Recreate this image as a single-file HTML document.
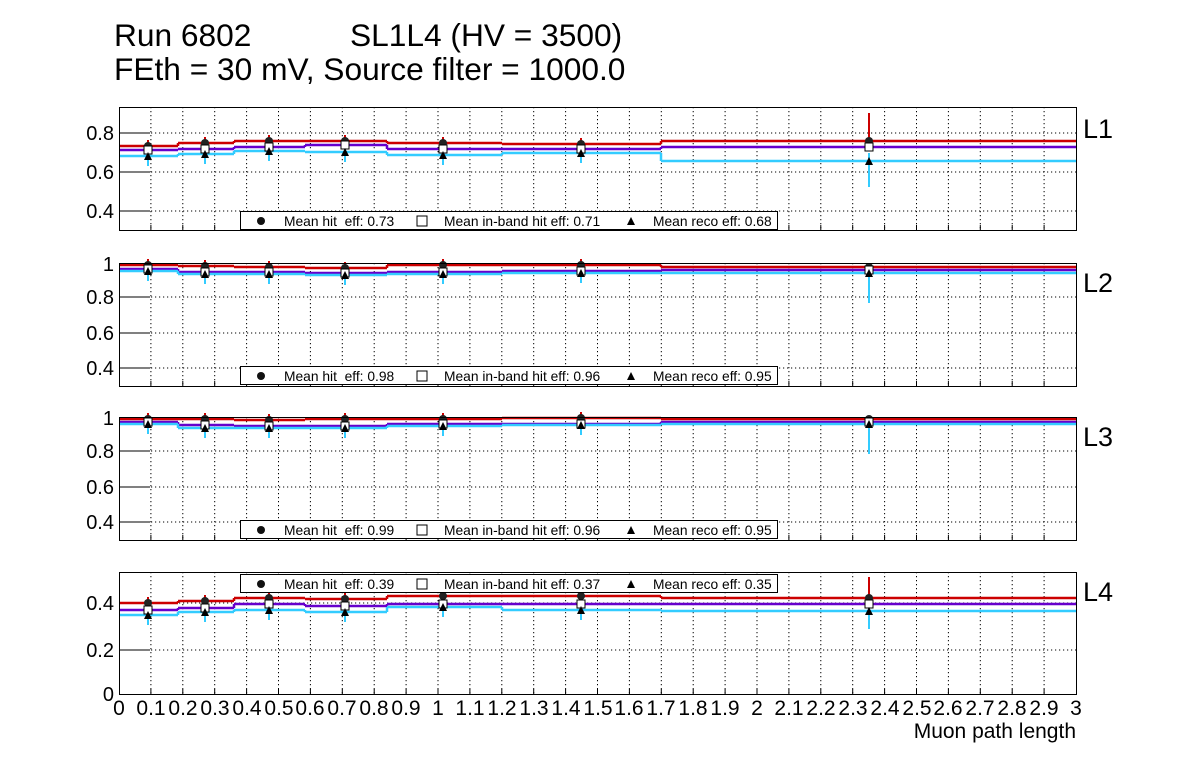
<!DOCTYPE html><html><head><meta charset="utf-8"><style>
body{margin:0;background:#fff;width:1196px;height:772px;overflow:hidden}
text{font-family:"Liberation Sans",sans-serif;fill:#000}
</style></head><body>
<svg id="s" width="1196" height="772" xmlns="http://www.w3.org/2000/svg">
<g id="g"></g>
<text x="114" y="46" font-size="31.7">Run 6802</text>
<text x="350" y="46" font-size="31.7">SL1L4 (HV = 3500)</text>
<text x="114" y="80" font-size="31.7">FEth = 30 mV, Source filter = 1000.0</text>
<g font-size="27"><text x="1083" y="138">L1</text><text x="1083" y="292">L2</text><text x="1083" y="446">L3</text><text x="1083" y="601">L4</text></g>
<g font-size="20" text-anchor="end">
<text x="114" y="140">0.8</text><text x="114" y="179">0.6</text><text x="114" y="218">0.4</text>
<text x="114" y="271">1</text><text x="114" y="304">0.8</text><text x="114" y="340">0.6</text><text x="114" y="375">0.4</text>
<text x="114" y="425">1</text><text x="114" y="458">0.8</text><text x="114" y="494">0.6</text><text x="114" y="529">0.4</text>
<text x="114" y="610">0.4</text><text x="114" y="657">0.2</text><text x="114" y="701">0</text>
</g>
<g font-size="21" text-anchor="middle">
<text x="119" y="715">0</text><text x="151" y="715">0.1</text><text x="183" y="715">0.2</text><text x="215" y="715">0.3</text><text x="247" y="715">0.4</text><text x="279" y="715">0.5</text><text x="310" y="715">0.6</text><text x="342" y="715">0.7</text><text x="374" y="715">0.8</text><text x="406" y="715">0.9</text><text x="438" y="715">1</text><text x="470" y="715">1.1</text><text x="502" y="715">1.2</text><text x="534" y="715">1.3</text><text x="566" y="715">1.4</text><text x="598" y="715">1.5</text><text x="629" y="715">1.6</text><text x="661" y="715">1.7</text><text x="693" y="715">1.8</text><text x="725" y="715">1.9</text><text x="757" y="715">2</text><text x="789" y="715">2.1</text><text x="821" y="715">2.2</text><text x="853" y="715">2.3</text><text x="885" y="715">2.4</text><text x="917" y="715">2.5</text><text x="948" y="715">2.6</text><text x="980" y="715">2.7</text><text x="1012" y="715">2.8</text><text x="1044" y="715">2.9</text><text x="1076" y="715">3</text>
</g>
<text x="1076" y="738" font-size="21" text-anchor="end">Muon path length</text>
<g font-size="13.8">
<text x="284" y="226">Mean hit&#160; eff: 0.73</text><text x="444" y="226">Mean in-band hit eff: 0.71</text><text x="653" y="226">Mean reco eff: 0.68</text>
<text x="284" y="381">Mean hit&#160; eff: 0.98</text><text x="444" y="381">Mean in-band hit eff: 0.96</text><text x="653" y="381">Mean reco eff: 0.95</text>
<text x="284" y="535">Mean hit&#160; eff: 0.99</text><text x="444" y="535">Mean in-band hit eff: 0.96</text><text x="653" y="535">Mean reco eff: 0.95</text>
<text x="284" y="589">Mean hit&#160; eff: 0.39</text><text x="444" y="589">Mean in-band hit eff: 0.37</text><text x="653" y="589">Mean reco eff: 0.35</text>
</g>
</svg>
<script>
var g=document.getElementById('g'),h='';
function L(x1,y1,x2,y2,c,w,d){h+='<line x1="'+x1+'" y1="'+y1+'" x2="'+x2+'" y2="'+y2+'" stroke="'+c+'" stroke-width="'+w+'"'+(d?' stroke-dasharray="1.2 2.8"':'')+'/>';}
var P=[[107,230,[133,172,211],211],[263,386,[297,333,368],366],[417,540,[451,487,522],520],[572,694,[603,650],574]];
var E=[119,178,234,305,387,502,661,1076],X=[148,205,269,345,443,581,869];
var D=[
[[146,143,141,141,143,144,141],[150,149,147,145,149,149,147],[156,154,151,152,155,153,161]],
[[265,266,267,268,265,265,267],[269,272,272,273,272,271,270],[271,274,274,275,274,273,273]],
[[419,419,420,419,419,418,419],[422,425,426,426,424,424,422],[424,428,428,428,426,425,424]],
[[603,601,598,599,596,596,598],[610,608,604,606,604,604,604],[615,612,610,612,607,610,611]]];
var UP=[28,3,3,21],DN=[26,30,30,18];
var C=['#cc0000','#6600cc','#33ccff'];
P.forEach(function(p,i){
 for(var k=1;k<30;k++){var x=119+k*957/30;L(x,p[0],x,p[1],'#000',1,1);L(x,p[1],x,p[1]-5,'#000',1);}
 p[2].forEach(function(y){L(119,y,1076,y,'#000',1,1);L(119,y,150,y,'#000',1);});
 D[i].forEach(function(r,j){for(var b=0;b<7;b++){L(E[b],r[b],E[b+1],r[b],C[j],2.5);if(b<6)L(E[b+1],r[b],E[b+1],r[b+1],C[j],2.5);}});
 X.forEach(function(x,b){var y=D[i][0][b];L(x,y-(b==6?UP[i]:6),x,y+6,C[0],2);L(x,D[i][2][b]-8,x,D[i][2][b]+(b==6?DN[i]:10),C[2],2);
  h+='<circle cx="'+x+'" cy="'+y+'" r="4" fill="#222"/><rect x="'+(x-4)+'" y="'+(D[i][1][b]-4)+'" width="8" height="8" fill="#fff" stroke="#000"/><path d="M'+(x-4)+' '+(D[i][2][b]+4)+'h8l-4-8z"/>';});
 h+='<rect x="119.5" y="'+(p[0]+.5)+'" width="957" height="'+(p[1]-p[0])+'" fill="none" stroke="#000"/>';
 var ly=p[3];h+='<rect x="240.5" y="'+(ly+.5)+'" width="537" height="18" fill="#fff" stroke="#000"/><circle cx="261" cy="'+(ly+10)+'" r="4" fill="#111"/><rect x="417" y="'+(ly+5)+'" width="10" height="10" fill="#fff" stroke="#000"/><path d="M627 '+(ly+14)+'h8l-4-8z"/>';
});
g.innerHTML=h;
</script>
</body></html>
